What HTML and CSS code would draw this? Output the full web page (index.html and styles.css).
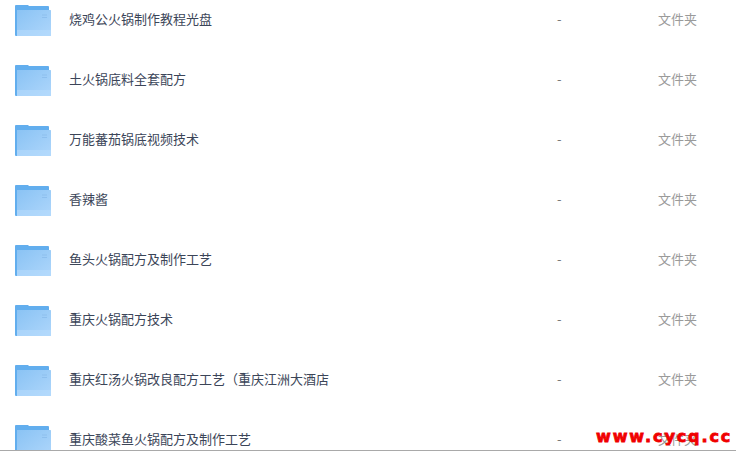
FILE: index.html
```html
<!DOCTYPE html>
<html lang="zh">
<head>
<meta charset="utf-8">
<title>文件列表</title>
<link rel="stylesheet" href="styles.css">
</head>
<body>
<svg class="defs" width="0" height="0" aria-hidden="true">
  <defs>
    <linearGradient id="front" x1="0" y1="0" x2="1" y2="1">
      <stop offset="0" stop-color="#8ac3f4"/>
      <stop offset="1" stop-color="#aed6fb"/>
    </linearGradient>
    <symbol id="folder" viewBox="0 0 36 31">
      <path d="M0 1Q0 0 1 0H13L14 1H33Q34 1 34 2V6H2V31H1Q0 31 0 30Z" fill="#62aeee"/>
      <path d="M2 5H35.500Q36 5 36 5.500V30.500Q36 31 35.500 31H2Z" fill="url(#front)"/>
      <rect x="2" y="25" width="34" height="6" fill="#b8dcfd" opacity=".55"/>
      <rect x="27" y="9.500" width="5" height="1" fill="#8dbfee"/>
      <rect x="27" y="12" width="5" height="1" fill="#8dbfee"/>
    </symbol>
  </defs>
</svg>
<main class="list">
  <div class="row"><svg class="icon"><use href="#folder"/></svg><span class="name">烧鸡公火锅制作教程光盘</span><span class="size">-</span><span class="type">文件夹</span></div>
  <div class="row"><svg class="icon"><use href="#folder"/></svg><span class="name">土火锅底料全套配方</span><span class="size">-</span><span class="type">文件夹</span></div>
  <div class="row"><svg class="icon"><use href="#folder"/></svg><span class="name">万能蕃茄锅底视频技术</span><span class="size">-</span><span class="type">文件夹</span></div>
  <div class="row"><svg class="icon"><use href="#folder"/></svg><span class="name">香辣酱</span><span class="size">-</span><span class="type">文件夹</span></div>
  <div class="row"><svg class="icon"><use href="#folder"/></svg><span class="name">鱼头火锅配方及制作工艺</span><span class="size">-</span><span class="type">文件夹</span></div>
  <div class="row"><svg class="icon"><use href="#folder"/></svg><span class="name">重庆火锅配方技术</span><span class="size">-</span><span class="type">文件夹</span></div>
  <div class="row"><svg class="icon"><use href="#folder"/></svg><span class="name">重庆红汤火锅改良配方工艺（重庆江洲大酒店</span><span class="size">-</span><span class="type">文件夹</span></div>
  <div class="row"><svg class="icon"><use href="#folder"/></svg><span class="name">重庆酸菜鱼火锅配方及制作工艺</span><span class="size">-</span><span class="type">文件夹</span></div>
</main>
<div class="watermark">www.cycq.cc</div>
</body>
</html>
```

FILE: styles.css
```css
html, body {
  margin: 0;
  padding: 0;
  background: #fff;
  overflow: hidden;
}
body {
  font-family: "Noto Sans CJK SC", "Liberation Sans", sans-serif;
  font-size: 13px;
  position: relative;
  width: 736px;
  height: 452px;
}
.defs {
  position: absolute;
}
.list {
  height: 451px;
  box-sizing: border-box;
  border-bottom: 1px solid #a9a9a9;
  overflow: hidden;
}
.row {
  display: flex;
  align-items: flex-start;
  height: 60px;
  padding-left: 15px;
}
.row:first-child {
  margin-top: -10px;
}
.icon {
  width: 36px;
  height: 31px;
  flex: none;
  margin: 15px 18px 0 0;
}
.name {
  width: 488px;
  flex: none;
  margin-top: 19px;
  color: #3b4558;
  line-height: 20px;
}
.size {
  width: 101px;
  flex: none;
  margin-top: 19px;
  color: #777;
  line-height: 20px;
}
.type {
  margin-top: 19px;
  color: #9a9a9a;
  line-height: 20px;
}
.watermark {
  position: absolute;
  left: 596px;
  top: 427px;
  font-family: "DejaVu Sans", sans-serif;
  font-weight: 700;
  font-size: 16px;
  line-height: 20px;
  letter-spacing: 1.9px;
  color: #f00000;
  -webkit-text-stroke: 0.8px #f00000;
  white-space: nowrap;
}
```
